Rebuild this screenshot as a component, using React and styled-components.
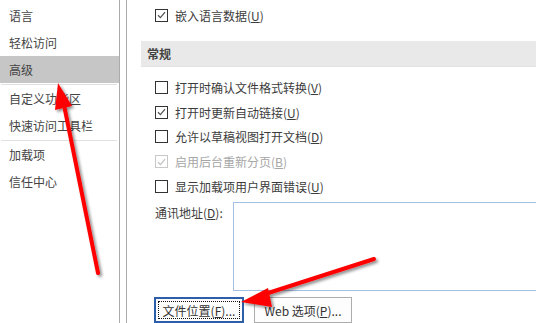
import React from 'react';
import styled, { createGlobalStyle } from 'styled-components';

const GlobalStyle = createGlobalStyle`
  html, body {
    margin: 0;
    padding: 0;
    background: #fff;
  }
  body {
    font-family: "Noto Sans CJK SC", "Noto Sans", sans-serif;
    font-size: 12px;
    color: #444;
  }
`;

const Window = styled.div`
  position: relative;
  width: 536px;
  height: 323px;
  overflow: hidden;
  display: flex;
  background: #fff;
`;

const Sidebar = styled.div`
  width: 119px;
  flex-shrink: 0;
  border-right: 1px solid #ababab;
  padding-top: 2px;
  display: flex;
  flex-direction: column;
`;

const NavItem = styled.div`
  height: 27px;
  display: flex;
  align-items: center;
  padding-left: 9px;
  background: ${p => (p.$active ? '#c6c6c6' : 'transparent')};
  color: #444;
`;

const NavDivider = styled.div`
  height: 1px;
  margin: 1px 2px 0 1px;
  background: #e1e1e1;
`;

const Gap = styled.div`
  width: 6px;
  flex-shrink: 0;
`;

const Panel = styled.div`
  flex: 1;
  border-left: 1px solid #ababab;
  padding-top: 3px;
  display: flex;
  flex-direction: column;
`;

const Row = styled.div`
  height: 25px;
  display: flex;
  align-items: center;
  padding-left: 28px;
  gap: 7px;
  white-space: nowrap;
  color: ${p => (p.$disabled ? '#a6a6a6' : '#3c3c3c')};
`;

const Box = styled.span`
  width: 11px;
  height: 11px;
  border: 1px solid ${p => (p.$disabled ? '#c8c8c8' : '#333')};
  background: #fff;
  display: flex;
  align-items: center;
  justify-content: center;
`;

const SectionHeader = styled.div`
  margin: 13px 0 8px 14px;
  height: 26px;
  display: flex;
  align-items: center;
  padding-left: 6px;
  background: #e9e9e9;
  border-bottom: 1px solid #e2e2e2;
  box-sizing: border-box;
  font-weight: bold;
  color: #444;
`;

const AddressRow = styled.div`
  display: flex;
  margin-top: 3px;
  padding-left: 28px;
`;

const AddressLabel = styled.div`
  width: 78px;
  padding-top: 2px;
  line-height: 17px;
  white-space: nowrap;
  color: #3c3c3c;
`;

const AddressBox = styled.div`
  flex: 1;
  height: 87px;
  margin-right: -20px;
  border: 1px solid #a6c0e3;
  background: #fff;
`;

const Buttons = styled.div`
  display: flex;
  gap: 10px;
  margin-top: 6px;
  padding-left: 27px;
`;

const Button = styled.div`
  box-sizing: border-box;
  width: ${p => p.$w}px;
  height: 26px;
  flex-shrink: 0;
  display: flex;
  align-items: center;
  justify-content: center;
  white-space: nowrap;
  background: #fdfdfd;
  color: #333;
  border: ${p => (p.$focus ? '2px solid #2d5ea8' : '1px solid #adadad')};
`;

const FocusRing = styled.span`
  box-sizing: border-box;
  width: 82px;
  height: 18px;
  display: flex;
  align-items: center;
  justify-content: center;
  border: 1px dotted #111;
`;

const Overlay = styled.svg`
  position: absolute;
  left: 0;
  top: 0;
  pointer-events: none;
`;

const Check = ({ color }) => (
  <svg width="9" height="8" viewBox="0 0 9 8">
    <path d="M1 4.2 L3.4 6.6 L8 1.2" fill="none" stroke={color} strokeWidth="1.3" />
  </svg>
);

const Option = ({ checked, disabled, children }) => (
  <Row $disabled={disabled}>
    <Box $disabled={disabled}>{checked && <Check color={disabled ? '#c0c0c0' : '#555'} />}</Box>
    <span>{children}</span>
  </Row>
);

export default function App() {
  return (
    <>
      <GlobalStyle />
      <Window>
        <Sidebar>
          <NavItem>语言</NavItem>
          <NavItem>轻松访问</NavItem>
          <NavItem $active>高级</NavItem>
          <NavDivider />
          <NavItem>自定义功能区</NavItem>
          <NavItem>快速访问工具栏</NavItem>
          <NavDivider />
          <NavItem>加载项</NavItem>
          <NavItem>信任中心</NavItem>
        </Sidebar>
        <Gap />
        <Panel>
          <Option checked>嵌入语言数据(<u>U</u>)</Option>
          <SectionHeader>常规</SectionHeader>
          <Option>打开时确认文件格式转换(<u>V</u>)</Option>
          <Option checked>打开时更新自动链接(<u>U</u>)</Option>
          <Option>允许以草稿视图打开文档(<u>D</u>)</Option>
          <Option checked disabled>启用后台重新分页(<u>B</u>)</Option>
          <Option>显示加载项用户界面错误(<u>U</u>)</Option>
          <AddressRow>
            <AddressLabel>通讯地址(<u>D</u>):</AddressLabel>
            <AddressBox />
          </AddressRow>
          <Buttons>
            <Button $w={90} $focus>
              <FocusRing>文件位置(<u>F</u>)...</FocusRing>
            </Button>
            <Button $w={98}>Web 选项(<u>P</u>)...</Button>
          </Buttons>
        </Panel>
        <Overlay width="536" height="323" viewBox="0 0 536 323">
          <defs>
            <filter id="sh" x="-20%" y="-20%" width="140%" height="140%">
              <feDropShadow dx="2" dy="2" stdDeviation="1.5" floodColor="#000" floodOpacity="0.45" />
            </filter>
          </defs>
          <g filter="url(#sh)" fill="#ff0000" stroke="#ff0000" strokeLinecap="round">
            <line x1="98" y1="273" x2="64" y2="105" strokeWidth="4" />
            <polygon points="58,83 55,110 72,106" stroke="none" />
            <line x1="374" y1="259" x2="262" y2="295" strokeWidth="4" />
            <polygon points="241,302 268,288 272,307" stroke="none" />
          </g>
        </Overlay>
      </Window>
    </>
  );
}
